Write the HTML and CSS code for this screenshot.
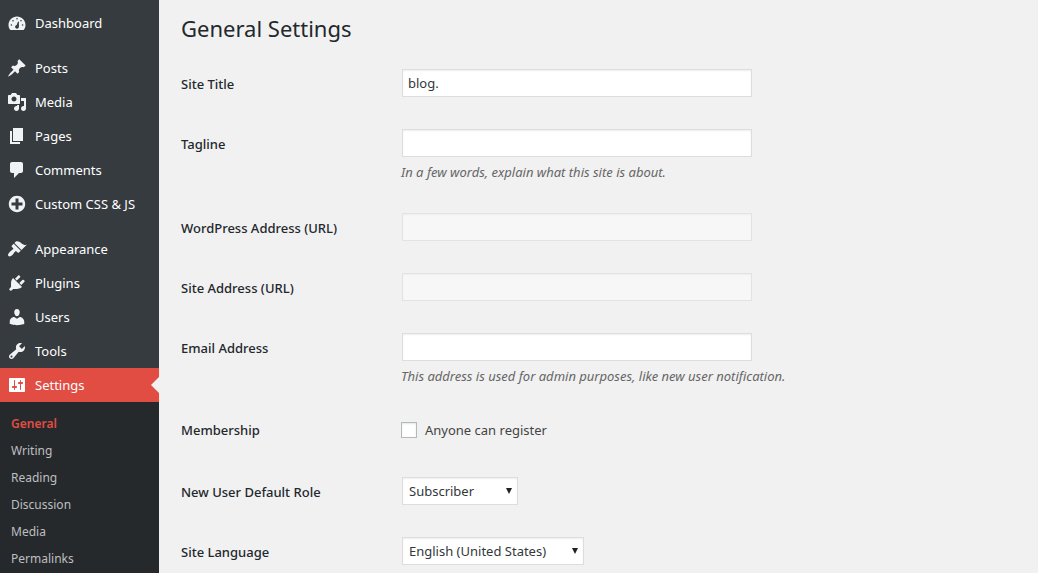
FILE: index.html
```html
<!DOCTYPE html>
<html lang="en">
    <head>
        <title>General Settings</title>
        <meta charset="UTF-8">
        <meta name="viewport" content="width=device-width, initial-scale=1.0">
        <link rel="stylesheet" href="styles.css">
    </head>
    <body>
        <!-- Admin menu -->
        <nav class="menu">
            <ul class="menu-list">
                <li>
                    <a href="#" class="menu-link">
                        <svg class="icon" viewBox="0 0 20 20"><path fill-rule="evenodd" d="M3.4 17h13.2c1.2-1.4 1.9-3.100 1.900-5 0-4.700-3.800-8.500-8.500-8.500S1.500 7.300 1.500 12c0 1.900.7 3.600 1.900 5zM9.200 5.800a.8.8 0 1 1 1.600 0 .8.8 0 0 1-1.600 0zM5.200 7.800a.8.8 0 1 1 1.600 0 .8.8 0 0 1-1.600 0zM13.200 7.800a.8.8 0 1 1 1.600 0 .8.8 0 0 1-1.600 0zM11 8.500l.9.200v5c0 1.200-.8 2-1.900 2s-1.900-.8-1.900-1.900c0-1 .7-1.700 1.600-1.900zM3.600 12a.8.8 0 1 1 1.600 0 .8.8 0 0 1-1.600 0zM14.800 12a.8.8 0 1 1 1.600 0 .8.8 0 0 1-1.600 0z"/></svg>
                        Dashboard
                    </a>
                </li>
                <li class="separator"></li>
                <li>
                    <a href="#" class="menu-link">
                        <svg class="icon" viewBox="0 0 20 20"><path d="M10.44 3.02l1.82-1.82 6.36 6.35-1.83 1.82c-1.05-.68-2.48-.57-3.41.36l-.75.75c-.92.93-1.04 2.35-.35 3.41l-1.83 1.82-2.41-2.41-2.8 2.79c-.42.42-3.38 2.71-3.8 2.29s1.86-3.39 2.28-3.81l2.79-2.79L4.1 9.36l1.83-1.82c1.05.69 2.48.57 3.4-.36l.75-.75c.93-.92 1.05-2.35.36-3.41z"/></svg>
                        Posts
                    </a>
                </li>
                <li>
                    <a href="#" class="menu-link">
                        <svg class="icon" viewBox="0 0 20 20"><path d="M13 11V4c0-.55-.45-1-1-1h-1.67L9 1H5L3.67 3H2c-.55 0-1 .45-1 1v7c0 .55.45 1 1 1h10c.55 0 1-.45 1-1zM7 4.5c1.38 0 2.5 1.12 2.5 2.5S8.38 9.5 7 9.5 4.5 8.38 4.5 7 5.62 4.5 7 4.5zM14 6h5v10.5c0 1.38-1.12 2.5-2.5 2.5S14 17.88 14 16.5s1.12-2.5 2.5-2.5c.17 0 .34.02.5.05V9h-3V6zm-4 8.05V13h2v3.5c0 1.38-1.12 2.5-2.5 2.5S7 17.88 7 16.5 8.12 14 9.5 14c.17 0 .34.02.5.05z" fill-rule="evenodd"/></svg>
                        Media
                    </a>
                </li>
                <li>
                    <a href="#" class="menu-link">
                        <svg class="icon" viewBox="0 0 20 20"><path d="M6 15V2h10v13H6zm-1 1h8v2H3V5h2v11z"/></svg>
                        Pages
                    </a>
                </li>
                <li>
                    <a href="#" class="menu-link">
                        <svg class="icon" viewBox="0 0 20 20"><path d="M5 2h9c1.1 0 2 .9 2 2v7c0 1.1-.9 2-2 2h-2l-5 5v-5H5c-1.1 0-2-.9-2-2V4c0-1.1.9-2 2-2z"/></svg>
                        Comments
                    </a>
                </li>
                <li>
                    <a href="#" class="menu-link">
                        <svg class="icon" viewBox="0 0 20 20"><path fill-rule="evenodd" d="M15.8 4.2c3.2 3.21 3.2 8.39 0 11.6-3.21 3.2-8.39 3.2-11.6 0C1 12.59 1 7.41 4.2 4.2 7.41 1 12.59 1 15.8 4.2zm-4.3 11.3v-4h4v-3h-4v-4h-3v4h-4v3h4v4h3z"/></svg>
                        Custom CSS &amp; JS
                    </a>
                </li>
                <li class="separator"></li>
                <li>
                    <a href="#" class="menu-link">
                        <svg class="icon" viewBox="0 0 20 20"><path d="M14.48 11.06L7.41 3.99l1.5-1.5c.5-.56 2.3-.47 3.51.32 1.21.8 1.43 1.28 2.91 2.1 1.18.64 2.45 1.26 4.45.85zm-.71.71L6.7 4.7 4.93 6.47c-.39.39-.39 1.02 0 1.41l1.06 1.06c.39.39.39 1.03 0 1.42-.6.6-1.43 1.11-2.21 1.69-.35.26-.7.53-1.01.84C1.43 14.23.4 16.08 1.4 17.07c.99 1 2.84-.03 4.18-1.36.31-.31.58-.66.85-1.02.57-.78 1.08-1.61 1.69-2.21.39-.39 1.02-.39 1.41 0l1.06 1.06c.39.39 1.02.39 1.41 0z"/></svg>
                        Appearance
                    </a>
                </li>
                <li>
                    <a href="#" class="menu-link">
                        <svg class="icon" viewBox="0 0 20 20"><path d="M13.11 4.36L9.87 7.6 8 5.73l3.24-3.24c.35-.34 1.05-.2 1.56.32.52.51.66 1.21.31 1.55zm-8 1.77l.91-1.12 9.01 9.01-1.19.84c-.71.71-2.63 1.16-3.82 1.16H6.14L4.9 17.26c-.59.59-1.54.59-2.12 0-.59-.58-.59-1.53 0-2.12l1.24-1.24v-3.88c0-1.13.4-3.19 1.09-3.89zm7.26 3.97l3.24-3.24c.34-.35 1.04-.21 1.55.31.52.51.66 1.21.31 1.55l-3.24 3.25z"/></svg>
                        Plugins
                    </a>
                </li>
                <li>
                    <a href="#" class="menu-link">
                        <svg class="icon" viewBox="0 0 20 20"><path d="M10 9.25c-2.27 0-2.73-3.44-2.73-3.44C7 4.02 7.82 2 9.97 2c2.16 0 2.98 2.02 2.71 3.81 0 0-.41 3.44-2.68 3.44zm0 2.57L12.72 10c2.39 0 4.52 2.33 4.52 4.53v2.49s-3.65 1.13-7.24 1.13c-3.65 0-7.24-1.13-7.24-1.13v-2.49c0-2.25 1.94-4.48 4.47-4.48z"/></svg>
                        Users
                    </a>
                </li>
                <li>
                    <a href="#" class="menu-link">
                        <svg class="icon" viewBox="0 0 20 20"><path fill-rule="evenodd" d="M16.68 9.77c-1.34 1.34-3.3 1.67-4.95.99l-5.41 6.52c-.99.99-2.59.99-3.58 0s-.99-2.59 0-3.57l6.52-5.42c-.68-1.65-.35-3.61.99-4.95 1.28-1.28 3.12-1.62 4.72-1.06l-2.89 2.89 2.82 2.82 2.86-2.87c.53 1.58.18 3.39-1.08 4.65zM3.81 16.21c.4.39 1.04.39 1.43 0 .4-.4.4-1.04 0-1.43-.39-.4-1.03-.4-1.43 0-.39.39-.39 1.03 0 1.43z"/></svg>
                        Tools
                    </a>
                </li>
                <li>
                    <a href="#" class="menu-link current">
                        <svg class="icon" viewBox="0 0 20 20"><path fill-rule="evenodd" d="M18 16V4c0-.55-.45-1-1-1H3c-.55 0-1 .45-1 1v12c0 .55.45 1 1 1h14c.55 0 1-.45 1-1zM8 11h1c.55 0 1 .45 1 1s-.45 1-1 1H8v1.500c0 .28-.22.5-.5.5s-.5-.22-.5-.5V13H6c-.55 0-1-.45-1-1s.45-1 1-1h1V5.500c0-.28.22-.5.5-.5s.5.22.5.5V11zm5-2h-1c-.55 0-1-.45-1-1s.45-1 1-1h1V5.500c0-.28.22-.5.5-.5s.5.22.5.5V7h1c.55 0 1 .45 1 1s-.45 1-1 1h-1v5.500c0 .28-.22.5-.5.5s-.5-.22-.5-.5V9z"/></svg>
                        Settings
                    </a>
                    <ul class="submenu">
                        <li><a href="#" class="active">General</a></li>
                        <li><a href="#">Writing</a></li>
                        <li><a href="#">Reading</a></li>
                        <li><a href="#">Discussion</a></li>
                        <li><a href="#">Media</a></li>
                        <li><a href="#">Permalinks</a></li>
                    </ul>
                </li>
            </ul>
        </nav>

        <!-- Settings form -->
        <main class="content">
            <h1>General Settings</h1>
            <form>
                <div class="form-row">
                    <label class="title" for="blogname">Site Title</label>
                    <div class="field">
                        <input type="text" id="blogname" value="blog.">
                    </div>
                </div>
                <div class="form-row">
                    <label class="title" for="tagline">Tagline</label>
                    <div class="field">
                        <input type="text" id="tagline">
                        <p class="description">In a few words, explain what this site is about.</p>
                    </div>
                </div>
                <div class="form-row">
                    <label class="title" for="siteurl">WordPress Address (URL)</label>
                    <div class="field">
                        <input type="text" id="siteurl" disabled>
                    </div>
                </div>
                <div class="form-row">
                    <label class="title" for="home">Site Address (URL)</label>
                    <div class="field">
                        <input type="text" id="home" disabled>
                    </div>
                </div>
                <div class="form-row">
                    <label class="title" for="email">Email Address</label>
                    <div class="field">
                        <input type="text" id="email">
                        <p class="description">This address is used for admin purposes, like new user notification.</p>
                    </div>
                </div>
                <div class="form-row check-row">
                    <span class="title">Membership</span>
                    <div class="field">
                        <label class="check">
                            <input type="checkbox" id="register">
                            Anyone can register
                        </label>
                    </div>
                </div>
                <div class="form-row">
                    <label class="title" for="role">New User Default Role</label>
                    <div class="field">
                        <div class="select role">
                            <select id="role">
                                <option>Subscriber</option>
                            </select>
                        </div>
                    </div>
                </div>
                <div class="form-row">
                    <label class="title" for="language">Site Language</label>
                    <div class="field">
                        <div class="select language">
                            <select id="language">
                                <option>English (United States)</option>
                            </select>
                        </div>
                    </div>
                </div>
            </form>
        </main>
    </body>
</html>
```
FILE: styles.css
```css
* {
    box-sizing: border-box;
}

body {
    display: flex;
    height: 100vh;
    margin: 0;
    overflow: hidden;
    background: #f1f1f1;
    color: #444;
    font-family: "Noto Sans", "Open Sans", sans-serif;
    font-size: 13px;
    line-height: 20px;
}

ul {
    margin: 0;
    padding: 0;
    list-style: none;
}

a {
    text-decoration: none;
}

.menu {
    flex: none;
    width: 159px;
    background: #363b3f;
}

.menu-list {
    padding-top: 6px;
}

.separator {
    height: 11px;
}

.menu-link {
    display: flex;
    align-items: center;
    gap: 8px;
    height: 34px;
    padding-left: 7px;
    color: #fff;
}

.icon {
    flex: none;
    width: 20px;
    height: 20px;
    fill: #f1f2f3;
}

.current {
    position: relative;
    background: #e14d43;
}

.current .icon {
    fill: #fff;
}

/* notch pointing at the active item */
.current::after {
    content: "";
    position: absolute;
    right: 0;
    top: 9px;
    border: 8px solid transparent;
    border-left: none;
    border-right-color: #f1f1f1;
}

.submenu {
    padding: 8px 0;
    background: #26292c;
}

.submenu a {
    display: block;
    padding: 4px 11px 3px;
    color: #bebfc0;
    font-size: 12px;
}

.submenu .active {
    color: #e14d43;
    font-weight: 600;
}

.content {
    flex: 1;
    padding: 13px 20px 0 22px;
}

h1 {
    margin: 0 0 11px;
    color: #23282d;
    font-size: 22px;
    font-weight: 400;
    line-height: 30px;
}

.form-row {
    display: flex;
    padding: 15px 0;
}

.title {
    flex: none;
    width: 220px;
    padding: 5px 10px 5px 0;
    color: #23282d;
    font-weight: 500;
}

.field {
    flex: 1;
}

input[type="text"] {
    display: block;
    width: 350px;
    max-width: 100%;
    height: 28px;
    margin: 0 1px;
    padding: 3px 5px;
    border: 1px solid #ddd;
    box-shadow: inset 0 1px 2px rgba(0,0,0,0.07);
    background: #fff;
    color: #32373c;
    font: inherit;
}

input[type="text"]:disabled {
    border-color: #e3e3e3;
    background: #f7f7f7;
    box-shadow: inset 0 1px 2px rgba(0,0,0,0.04);
}

.description {
    margin: 5px 0 1px;
    color: #666;
    font-style: italic;
}

.check-row {
    padding: 13px 0 17px;
}

.check {
    display: flex;
    align-items: center;
    gap: 8px;
    padding: 5px 0;
}

.check input {
    appearance: none;
    width: 16px;
    height: 16px;
    margin: 0;
    border: 1px solid #b4b9be;
    background: #fff;
    box-shadow: inset 0 1px 2px rgba(0,0,0,0.1);
}

.select {
    position: relative;
    margin: 0 1px;
}

.role {
    width: 116px;
}

.language {
    width: 182px;
}

.select select {
    appearance: none;
    display: block;
    width: 100%;
    height: 28px;
    padding: 2px 6px;
    border: 1px solid #ddd;
    border-radius: 0;
    background: #fff;
    box-shadow: inset 0 1px 2px rgba(0,0,0,0.07);
    color: #32373c;
    font: inherit;
}

.select::after {
    content: "";
    position: absolute;
    right: 6px;
    top: 11px;
    border: 3px solid transparent;
    border-top: 6px solid #222;
    border-bottom: none;
    pointer-events: none;
}
```
